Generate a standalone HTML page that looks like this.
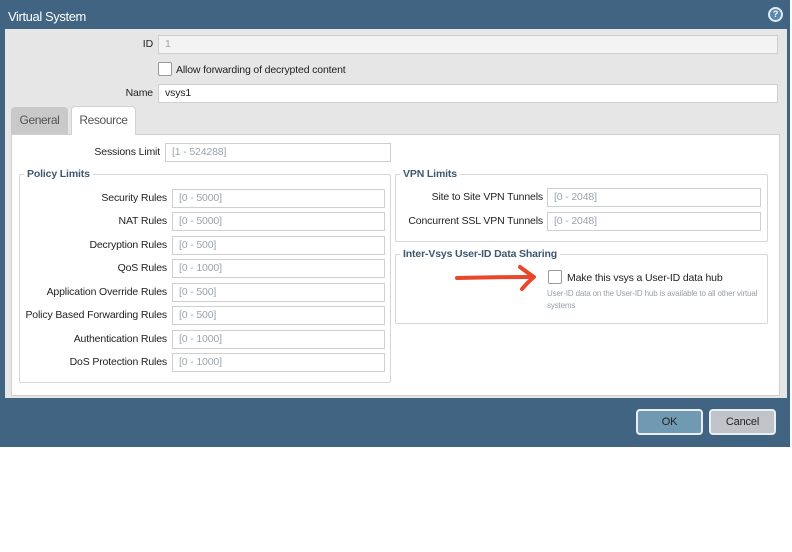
<!DOCTYPE html>
<html><head><meta charset="utf-8"><style>
body{margin:0;width:792px;height:552px;background:#fff;position:relative;overflow:hidden;font-family:"Liberation Sans",Arial,sans-serif;font-size:10.5px;letter-spacing:-0.15px;color:#222}
div,span{position:absolute;box-sizing:border-box}
.inp{background:#fff;border:1px solid #cfcfcf;height:19px;padding-left:6px;line-height:17px;color:#9aa4ae}
.lbl{text-align:right;white-space:nowrap;line-height:19px}
.fs{border:1px solid #d6d6d6;border-radius:2px}
.lg{background:#fff;font-weight:bold;color:#3d5870;padding:0 3px;line-height:12px;font-size:10.5px}
.cb{width:14px;height:14px;border:1px solid #9a9a9a;border-radius:2px;background:#fff}
.btn{border:2px solid #e8eef2;border-radius:4px;height:26px;line-height:22px;text-align:center;font-size:11px;color:#222}
</style></head><body>
<div style="left:0;top:0;width:790px;height:447px;background:#406482"></div>
<span style="left:8px;top:8px;color:#fff;font-size:13px;line-height:18px;letter-spacing:-0.4px">Virtual System</span>
<div style="left:768px;top:7px;width:15px;height:15px;border-radius:50%;background:#5b88ad;border:2px solid #dfe9f1;color:#fff;font-weight:bold;font-size:9px;line-height:11px;text-align:center">?</div>
<div style="left:5px;top:29px;width:782px;height:369px;background:#e6e6e6"></div>
<span class="lbl" style="left:100px;top:35px;width:53px">ID</span>
<div class="inp" style="left:158px;top:35px;width:620px;background:#f3f3f3">1</div>
<div class="cb" style="left:158px;top:62px"></div>
<span style="left:176px;top:63px;line-height:14px">Allow forwarding of decrypted content</span>
<span class="lbl" style="left:100px;top:84px;width:53px">Name</span>
<div class="inp" style="left:158px;top:84px;width:620px;color:#222">vsys1</div>
<div style="left:11px;top:107px;width:57px;height:27px;background:#c9c9c9;border-radius:4px 4px 0 0;color:#555;font-size:12px;letter-spacing:-0.4px;text-align:center;line-height:27px">General</div>
<div style="left:71px;top:106px;width:65px;height:29px;background:#fff;border:1px solid #d0d0d0;border-bottom:none;border-radius:4px 4px 0 0;color:#555;font-size:12px;letter-spacing:-0.4px;text-align:center;line-height:27px;z-index:2">Resource</div>
<div style="left:11px;top:134px;width:769px;height:262px;background:#fff;border:1px solid #d0d0d0"></div>
<span class="lbl" style="left:60px;top:143px;width:100px">Sessions Limit</span>
<div class="inp" style="left:165px;top:143px;width:226px">[1 - 524288]</div>

<div class="fs" style="left:19px;top:174px;width:372px;height:209px"></div>
<span class="lg" style="left:24px;top:168px">Policy Limits</span>
<span class="lbl" style="left:10px;top:189px;width:157px">Security Rules</span><div class="inp" style="left:172px;top:189px;width:213px">[0 - 5000]</div>
<span class="lbl" style="left:10px;top:212px;width:157px">NAT Rules</span><div class="inp" style="left:172px;top:212px;width:213px">[0 - 5000]</div>
<span class="lbl" style="left:10px;top:236px;width:157px">Decryption Rules</span><div class="inp" style="left:172px;top:236px;width:213px">[0 - 500]</div>
<span class="lbl" style="left:10px;top:259px;width:157px">QoS Rules</span><div class="inp" style="left:172px;top:259px;width:213px">[0 - 1000]</div>
<span class="lbl" style="left:10px;top:283px;width:157px">Application Override Rules</span><div class="inp" style="left:172px;top:283px;width:213px">[0 - 500]</div>
<span class="lbl" style="left:10px;top:306px;width:157px">Policy Based Forwarding Rules</span><div class="inp" style="left:172px;top:306px;width:213px">[0 - 500]</div>
<span class="lbl" style="left:10px;top:330px;width:157px">Authentication Rules</span><div class="inp" style="left:172px;top:330px;width:213px">[0 - 1000]</div>
<span class="lbl" style="left:10px;top:353px;width:157px">DoS Protection Rules</span><div class="inp" style="left:172px;top:353px;width:213px">[0 - 1000]</div>

<div class="fs" style="left:395px;top:174px;width:373px;height:68px"></div>
<span class="lg" style="left:400px;top:168px">VPN Limits</span>
<span class="lbl" style="left:395px;top:188px;width:148px">Site to Site VPN Tunnels</span><div class="inp" style="left:547px;top:188px;width:214px">[0 - 2048]</div>
<span class="lbl" style="left:395px;top:212px;width:148px">Concurrent SSL VPN Tunnels</span><div class="inp" style="left:547px;top:212px;width:214px">[0 - 2048]</div>

<div class="fs" style="left:395px;top:254px;width:373px;height:70px"></div>
<span class="lg" style="left:400px;top:248px">Inter-Vsys User-ID Data Sharing</span>
<div class="cb" style="left:548px;top:270px"></div>
<span style="left:567px;top:271px;line-height:14px">Make this vsys a User-ID data hub</span>
<span style="left:547px;top:288px;font-size:8px;color:#9aa0a6;line-height:12px;width:220px">User-ID data on the User-ID hub is available to all other virtual systems</span>
<svg style="position:absolute;left:450px;top:262px" width="92" height="32"><path d="M7 16 Q40 15 82 15" stroke="#e8472a" stroke-width="4" fill="none" stroke-linecap="round"/><path d="M70 5 Q78 11 84 15 Q78 20 72 27" stroke="#e8472a" stroke-width="4" fill="none" stroke-linecap="round" stroke-linejoin="round"/></svg>

<div class="btn" style="left:636px;top:409px;width:67px;background:#7099b2">OK</div>
<div class="btn" style="left:709px;top:409px;width:67px;background:#c0c3c7">Cancel</div>
</body></html>
